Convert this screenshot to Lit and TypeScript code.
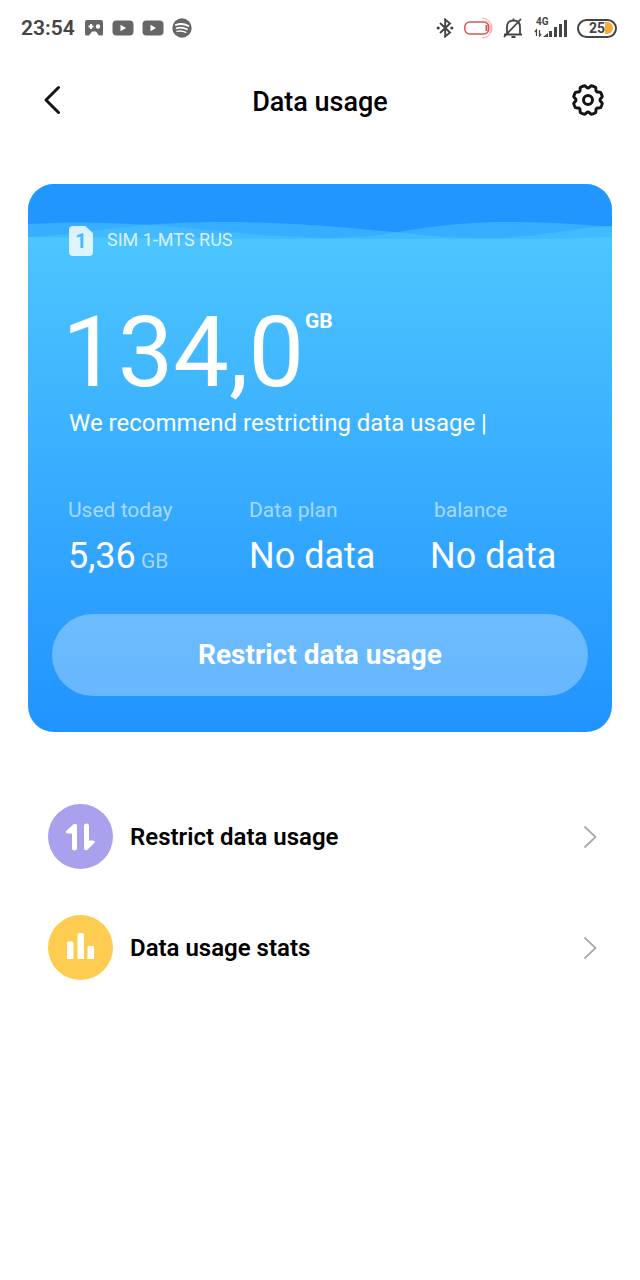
import { LitElement, html, css, svg } from "lit";
import { customElement } from "lit/decorators.js";

const youtube = html`<svg width="22" height="16" viewBox="0 0 22 16">
  <rect x="0.5" y="0.5" width="21" height="15" rx="4" fill="#666" />
  <path d="M8.500 4.800 14 8l-5.500 3.200z" fill="#fff" />
</svg>`;

const chevron = html`<svg class="chevron" width="14" height="24" viewBox="0 0 14 24">
  <path d="M1.500 1.500 12.500 12 1.500 22.500" fill="none" stroke="#aaa" stroke-width="1.800" />
</svg>`;

// Outline of the settings cog: eight rounded teeth with shallow notches between them.
const gearPath = (() => {
  const points: string[] = [];
  const steps = 160;
  for (let i = 0; i < steps; i++) {
    const a = (i / steps) * Math.PI * 2;
    const wave = Math.max(-1, Math.min(0.5, 1.3 * Math.cos(8 * (a - Math.PI / 8)) + 0.2));
    const r = 13.8 + wave * 1.7;
    points.push(`${(17 + r * Math.sin(a)).toFixed(2)} ${(17 - r * Math.cos(a)).toFixed(2)}`);
  }
  return `M${points.join("L")}Z`;
})();

@customElement("status-bar")
export class StatusBar extends LitElement {
  static styles = css`
    :host {
      display: flex;
      align-items: center;
      height: 56px;
      padding: 0 23px 0 21px;
      color: #444;
      font-family: Roboto, sans-serif;
    }
    .time {
      font-size: 21px;
      font-weight: 600;
      margin-right: 9px;
    }
    .group {
      display: flex;
      align-items: center;
      gap: 8px;
    }
    .right {
      margin-left: auto;
      gap: 9px;
    }
    .signal {
      display: flex;
      flex-direction: column;
      height: 22px;
    }
    .net {
      font-size: 10px;
      line-height: 10px;
      font-weight: 700;
      padding-left: 2px;
    }
    .signal svg {
      margin-top: -7px;
    }
    .battery {
      box-sizing: border-box;
      display: flex;
      align-items: center;
      justify-content: flex-end;
      width: 40px;
      height: 19px;
      border: 2px solid #444;
      border-radius: 10px;
      font-size: 14px;
      line-height: 15px;
      font-weight: 700;
    }
    .charge {
      width: 8px;
      height: 12px;
      margin-right: 2px;
      border-radius: 0 6px 6px 0;
      background: #f9aa33;
    }
    svg {
      display: block;
    }
  `;

  render() {
    return html`
      <span class="time">23:54</span>
      <div class="group">
        <svg width="20" height="18" viewBox="0 0 20 18">
          <path fill="#666" fill-rule="evenodd" d="M3 1h14q2 0 2 2v12q0 1.500-1.500 1.500H15L12 12.500H8L5 16.500H2.500Q1 16.500 1 15V3q0-2 2-2zM6 5v1.500H4.500v2H6V10h2V8.500h1.500v-2H8V5zM14 5.300a2.200 2.200 0 1 0 0 4.400 2.200 2.200 0 0 0 0-4.400z" />
        </svg>
        ${youtube} ${youtube}
        <svg width="20" height="20" viewBox="0 0 20 20">
          <circle cx="10" cy="10" r="9.700" fill="#666" />
          <g fill="none" stroke="#fff" stroke-linecap="round">
            <path d="M4 6.900q6.500-2 12.300 1" stroke-width="2" />
            <path d="M4.500 10.300q5.600-1.600 10.500 1" stroke-width="1.700" />
            <path d="M5 13.400q4.600-1.200 8.800 1" stroke-width="1.400" />
          </g>
        </svg>
      </div>
      <div class="group right">
        <svg width="20" height="20" viewBox="0 0 20 20">
          <path d="M5 5l10 9.500-4.800 4V1.500l4.800 4L5 15" fill="none" stroke="#444" stroke-width="1.900" />
          <circle cx="3.200" cy="10" r="1.600" fill="#444" />
          <circle cx="16.800" cy="10" r="1.600" fill="#444" />
        </svg>
        <svg width="30" height="22" viewBox="0 0 30 22">
          <rect x="0.800" y="5" width="24" height="12" rx="5" fill="none" stroke="#dc5555" stroke-width="1.500" />
          <path d="M22.500 8v6" stroke="#dc5555" stroke-width="2" />
          <path d="M18 1a10 10 0 1 1 0 20M19.500 4a7.500 7.500 0 0 1 6 12" fill="none" stroke="#ecaaaa" stroke-width="1" />
        </svg>
        <svg width="22" height="22" viewBox="0 0 22 22">
          <path d="M1 17.500h18M4 17V10q0-6.500 6.500-6.500t6.500 6.500v7M8.500 20h4M10.500 1.500v2M1 20 18 2" fill="none" stroke="#444" stroke-width="1.800" />
        </svg>
        <div class="signal">
          <span class="net">4G</span>
          <svg width="34" height="17" viewBox="0 0 34 17">
            <path d="M2.500 16v-6L.8 12M5.500 10v6l1.700-2" fill="none" stroke="#444" stroke-width="1.200" />
            <path d="M9 17l5-4v4zM15 11h3v6h-3zM20 7h3v10h-3zM25 4h3v13h-3zM30 0h3v17h-3z" fill="#444" />
          </svg>
        </div>
        <div class="battery"><span>25</span><span class="charge"></span></div>
      </div>
    `;
  }
}

@customElement("usage-card")
export class UsageCard extends LitElement {
  static styles = css`
    :host {
      display: block;
      position: relative;
      overflow: hidden;
      margin: 0 28px;
      border-radius: 26px;
      background: linear-gradient(#4dc5ff 54px, #2193ff 100%);
      color: #fff;
      font-family: Roboto, sans-serif;
    }
    .waves {
      display: block;
      position: absolute;
      top: 0;
      left: 0;
      width: 100%;
      height: 56px;
    }
    .content {
      position: relative;
      padding: 42px 24px 36px;
    }
    .sim {
      display: flex;
      align-items: center;
      gap: 14px;
      height: 30px;
      padding-left: 17px;
      font-size: 18px;
      line-height: 28px;
      color: rgba(255, 255, 255, 0.8);
    }
    .sim-name {
      align-self: flex-start;
    }
    .chip {
      display: grid;
      place-items: center;
      width: 24px;
      height: 30px;
      border-radius: 4px;
      background: rgba(255, 255, 255, 0.82);
      clip-path: polygon(0 0, 68% 0, 100% 24%, 100% 100%, 0 100%);
      color: #4ab9f5;
      font-size: 20px;
      font-weight: 700;
    }
    .amount {
      display: flex;
      align-items: flex-start;
      gap: 1px;
      padding: 44px 0 0 10px;
    }
    .number {
      font-size: 99px;
      line-height: 104px;
    }
    .unit {
      font-size: 21px;
      line-height: 24px;
      font-weight: 700;
      padding-top: 9px;
    }
    .advice {
      margin: 3px 0 0;
      padding-left: 17px;
      font-size: 24px;
      line-height: 32px;
    }
    .stats {
      display: grid;
      grid-template-columns: 181px 181px auto;
      margin: 57px 0 0;
      padding-left: 16px;
    }
    dt {
      font-size: 21px;
      line-height: 28px;
      color: rgba(255, 255, 255, 0.58);
    }
    .balance dt {
      padding-left: 4px;
    }
    dd {
      margin: 10px 0 0;
      font-size: 36px;
      line-height: 44px;
      white-space: nowrap;
    }
    small {
      font-size: 21px;
      color: rgba(255, 255, 255, 0.58);
    }
    button {
      display: block;
      width: 100%;
      height: 82px;
      margin-top: 31px;
      border: 0;
      border-radius: 41px;
      background: rgba(255, 255, 255, 0.31);
      color: #fff;
      font: 700 28px/36px Roboto, sans-serif;
    }
  `;

  render() {
    return html`
      <svg class="waves" viewBox="0 0 584 56" preserveAspectRatio="none" aria-hidden="true">
        <path fill="#2196ff" d="M0 0H584V53Q540 55 470 55H250Q120 54 0 53Z" />
        <path fill="#4dc5ff" fill-opacity="0.5" d="M0 40C60 36 120 40 180 46S300 56 345 52C385 46 420 38 482 38 530 38 560 41 584 43V56H0Z" />
        <path fill="#4dc5ff" fill-opacity="0.5" d="M0 53C60 50 100 38 190 38 280 38 330 45 367 48 410 53 450 56 490 53 530 49 560 42 584 42V56H0Z" />
      </svg>
      <div class="content">
        <div class="sim"><span class="chip">1</span><span class="sim-name">SIM 1-MTS RUS</span></div>
        <div class="amount"><span class="number">134,0</span><span class="unit">GB</span></div>
        <p class="advice">We recommend restricting data usage |</p>
        <dl class="stats">
          <div><dt>Used today</dt><dd>5,36<small> GB</small></dd></div>
          <div><dt>Data plan</dt><dd>No data</dd></div>
          <div class="balance"><dt>balance</dt><dd>No data</dd></div>
        </dl>
        <button type="button">Restrict data usage</button>
      </div>
    `;
  }
}

@customElement("app-root")
export class AppRoot extends LitElement {
  static styles = css`
    :host {
      display: block;
      min-height: 100vh;
      background: #fff;
      color: #000;
      font-family: Roboto, sans-serif;
    }
    header {
      display: grid;
      grid-template-columns: 48px 1fr 48px;
      align-items: center;
      height: 88px;
      margin-bottom: 40px;
      padding: 0 28px;
    }
    h1 {
      margin: 0;
      padding-top: 4px;
      font-size: 27px;
      line-height: 36px;
      font-weight: 500;
      text-align: center;
    }
    header button {
      display: grid;
      place-items: center;
      height: 48px;
      padding: 0;
      border: 0;
      background: none;
    }
    svg {
      display: block;
    }
    nav {
      display: grid;
      gap: 46px;
      padding: 72px 43px 40px 48px;
    }
    a {
      display: flex;
      align-items: center;
      gap: 17px;
      color: #000;
      text-decoration: none;
      font-size: 24px;
      line-height: 32px;
      font-weight: 600;
    }
    .chevron {
      margin-left: auto;
    }
  `;

  render() {
    return html`
      <status-bar></status-bar>
      <header>
        <button type="button" aria-label="Back">
          <svg width="18" height="30" viewBox="0 0 18 30">
            <path d="M15.500 2.500 3 15l12.500 12.500" fill="none" stroke="#151515" stroke-width="3" stroke-linecap="round" stroke-linejoin="round" />
          </svg>
        </button>
        <h1>Data usage</h1>
        <button type="button" aria-label="Settings">
          <svg width="34" height="34" viewBox="0 0 34 34">
            ${svg`<path d=${gearPath} fill="none" stroke="#151515" stroke-width="3" stroke-linejoin="round" />`}
            <circle cx="17" cy="17" r="4.500" fill="none" stroke="#151515" stroke-width="3" />
          </svg>
        </button>
      </header>
      <main>
        <usage-card></usage-card>
        <nav>
          <a href="#restrict">
            <svg width="65" height="65" viewBox="0 0 65 65">
              <circle cx="32.500" cy="32.500" r="32.500" fill="#a9a0ee" />
              <path fill="#fff" d="M18.200 27 25.500 20.300Q29 18.500 29 22V44Q29 46.500 26.500 46.500T24 44V29.500H20Q17 29 18.200 27zM46.300 39 39.500 45.700Q36 47.500 36 44V22Q36 19.500 38.500 19.500T41 22V36.500H44.500Q48 37 46.300 39z" />
            </svg>
            <span>Restrict data usage</span>
            ${chevron}
          </a>
          <a href="#stats">
            <svg width="65" height="65" viewBox="0 0 65 65">
              <circle cx="32.500" cy="32.500" r="32.500" fill="#ffcc52" />
              <path fill="#fff" d="M19 28q0-1.500 1.500-1.500H24q1.500 0 1.500 1.500V44H19zM29.500 19.500q0-1.500 1.500-1.500h3.500q1.500 0 1.500 1.500V44h-6.500zM39.500 32.500q0-1.500 1.500-1.500h3.500q1.500 0 1.500 1.500V44h-6.500z" />
            </svg>
            <span>Data usage stats</span>
            ${chevron}
          </a>
        </nav>
      </main>
    `;
  }
}
